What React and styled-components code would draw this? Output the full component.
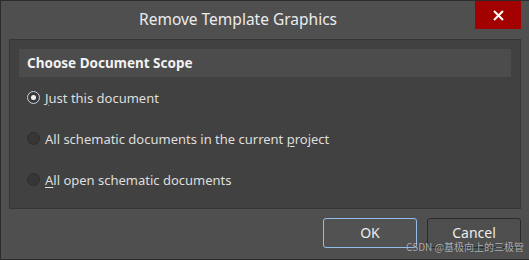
import React, { useState } from "react";
import styled, { createGlobalStyle } from "styled-components";

const GlobalStyle = createGlobalStyle`
  html, body {
    margin: 0;
    padding: 0;
    background: #4f4f4f;
  }
  * {
    box-sizing: border-box;
  }
`;

const Window = styled.div`
  position: relative;
  width: 529px;
  height: 260px;
  display: flex;
  flex-direction: column;
  background: #4f4f4f;
  border: 1px solid #2c2c2c;
  border-right: none;
  font-family: "Noto Sans", "Open Sans", sans-serif;
  color: #e4e4e4;
`;

const TitleBar = styled.div`
  height: 38px;
  display: flex;
  align-items: flex-start;
  padding-right: 8px;
`;

const Title = styled.div`
  flex: 1;
  text-align: center;
  font-size: 15.5px;
  line-height: 36px;
  color: #ececec;
`;

const CloseButton = styled.button`
  width: 46px;
  height: 28px;
  border: none;
  padding: 0;
  background: #a30000;
  display: flex;
  align-items: center;
  justify-content: center;
  cursor: pointer;
`;

const Panel = styled.div`
  margin: 0 8px;
  height: 170px;
  padding: 9px 9px;
  background: #414141;
  border: 1px solid #363636;
`;

const SectionHeader = styled.div`
  height: 28px;
  display: flex;
  align-items: center;
  padding-left: 8px;
  background: #4c4c4c;
  font-size: 13.5px;
  font-weight: 700;
  color: #f2f2f2;
`;

const OptionRow = styled.label`
  height: 41px;
  display: flex;
  align-items: center;
  gap: 5px;
  padding-left: 8px;
  font-size: 13px;
  color: #dedede;
  cursor: pointer;

  u {
    text-decoration: underline;
    text-underline-offset: 2px;
  }
`;

const RadioDot = styled.span`
  width: 13px;
  height: 13px;
  border-radius: 50%;
  flex-shrink: 0;
  display: flex;
  align-items: center;
  justify-content: center;
  background: ${({ checked }) => (checked ? "#3a3a3a" : "#363636")};
  border: 1px solid ${({ checked }) => (checked ? "#c9d3de" : "#2e2e2e")};

  &::after {
    content: "";
    width: 5px;
    height: 5px;
    border-radius: 50%;
    background: #f4f4f4;
    display: ${({ checked }) => (checked ? "block" : "none")};
  }
`;

const Footer = styled.div`
  display: flex;
  justify-content: flex-end;
  gap: 10px;
  padding: 9px 8px 0 0;
`;

const Button = styled.button`
  width: 94px;
  height: 30px;
  border-radius: 3px;
  background: ${({ primary }) => (primary ? "#525252" : "#4e4e4e")};
  border: 1px solid ${({ primary }) => (primary ? "#92bde8" : "#2b2b2b")};
  color: #ececec;
  font-family: inherit;
  font-size: 14px;
  line-height: 26px;
  padding: 0;
  cursor: pointer;
`;

const Watermark = styled.div`
  position: absolute;
  right: 5px;
  bottom: 5px;
  font-family: "Noto Sans CJK SC", "Noto Sans", sans-serif;
  font-size: 10px;
  color: rgba(215, 215, 215, 0.75);
  text-shadow: 0 0 1px rgba(0, 0, 0, 0.3);
  pointer-events: none;
`;

const options = [
  { id: "this", label: <><u>J</u>ust this document</> },
  { id: "project", label: <>All schematic documents in the current <u>p</u>roject</> },
  { id: "open", label: <><u>A</u>ll open schematic documents</> },
];

export default function App() {
  const [scope, setScope] = useState("this");

  return (
    <>
      <GlobalStyle />
      <Window>
        <TitleBar>
          <Title>Remove Template Graphics</Title>
          <CloseButton aria-label="Close">
            <svg width="11" height="11" viewBox="0 0 11 11">
              <path d="M1 1 L10 10 M10 1 L1 10" stroke="#fff" strokeWidth="2" />
            </svg>
          </CloseButton>
        </TitleBar>
        <Panel>
          <SectionHeader>Choose Document Scope</SectionHeader>
          {options.map((o) => (
            <OptionRow key={o.id} onClick={() => setScope(o.id)}>
              <RadioDot checked={scope === o.id} />
              <span>{o.label}</span>
            </OptionRow>
          ))}
        </Panel>
        <Footer>
          <Button primary>OK</Button>
          <Button>Cancel</Button>
        </Footer>
        <Watermark>CSDN @基极向上的三极管</Watermark>
      </Window>
    </>
  );
}
